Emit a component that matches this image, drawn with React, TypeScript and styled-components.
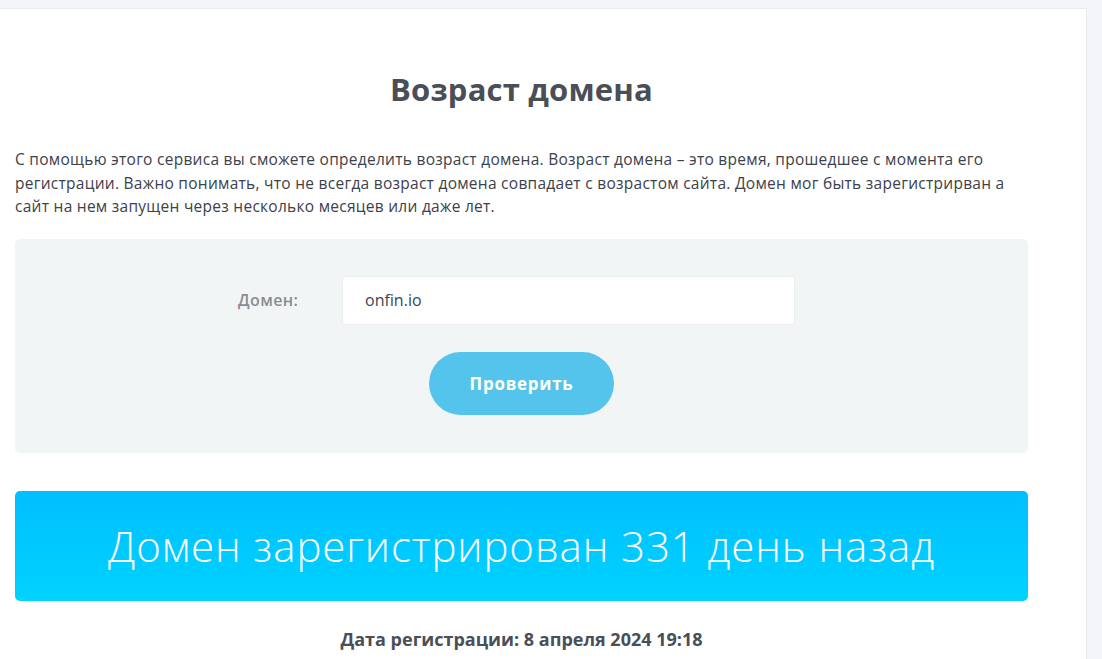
import React from "react";
import styled, { createGlobalStyle } from "styled-components";

const Global = createGlobalStyle`
  html, body { margin: 0; padding: 0; background: #f4f5f8; }
  body { font-family: "Open Sans", "Noto Sans", sans-serif; }
  * { box-sizing: border-box; }
`;

const Card = styled.div`
  margin-top: 8px;
  width: 1087px;
  min-height: 651px;
  background: #ffffff;
  border-top: 1px solid #e8eaee;
  border-right: 1px solid #e8eaee;
  padding: 62px 0 0 15px;
`;

const Inner = styled.div`
  width: 1013px;
  display: flex;
  flex-direction: column;
`;

const Title = styled.h1`
  margin: 0;
  font-family: "Open Sans", sans-serif;
  font-weight: 700;
  font-size: 31px;
  letter-spacing: 0.2px;
  line-height: 36px;
  color: #4a4e57;
  text-align: center;
`;

const Lead = styled.p`
  margin: 41px 0 0;
  font-size: 15.5px;
  letter-spacing: 0.27px;
  line-height: 23.5px;
  color: #3d4149;
  white-space: nowrap;
`;

const FormBox = styled.div`
  margin-top: 20px;
  height: 214px;
  background: #f2f5f6;
  border-radius: 5px;
  padding-top: 37px;
  display: flex;
  flex-direction: column;
  align-items: center;
  gap: 27px;
`;

const Row = styled.div`
  display: flex;
  align-items: center;
  padding-right: 10px;
`;

const Label = styled.label`
  width: 104px;
  font-size: 16px;
  letter-spacing: 0.4px;
  font-weight: 600;
  color: #8a8d91;
`;

const Input = styled.div`
  width: 453px;
  height: 49px;
  background: #fff;
  border: 1px solid #eceef0;
  border-radius: 3px;
  display: flex;
  align-items: center;
  padding-left: 22px;
  font-size: 16px;
  color: #3c4550;
`;

const Button = styled.button`
  width: 185px;
  height: 63px;
  border: none;
  border-radius: 32px;
  background: #55c4ec;
  color: #fff;
  font-family: inherit;
  font-weight: 700;
  font-size: 17px;
  letter-spacing: 0.7px;
  cursor: pointer;
`;

const Result = styled.div`
  margin-top: 38px;
  height: 110px;
  border-radius: 5px;
  background: linear-gradient(180deg, #00bfff 0%, #00d3ff 100%);
  display: flex;
  align-items: center;
  justify-content: center;
  color: #fff;
  font-size: 42px;
  letter-spacing: 0.9px;
  font-weight: 300;
`;

const DateLine = styled.div`
  margin-top: 26px;
  text-align: center;
  font-size: 18px;
  line-height: 24px;
  font-weight: 700;
  color: #4a4e57;
`;

export default function App() {
  return (
    <>
      <Global />
      <Card>
        <Inner>
          <Title>Возраст домена</Title>
          <Lead>
            С помощью этого сервиса вы сможете определить возраст домена. Возраст домена – это время, прошедшее с момента его
            <br />
            регистрации. Важно понимать, что не всегда возраст домена совпадает с возрастом сайта. Домен мог быть зарегистрирван а
            <br />
            сайт на нем запущен через несколько месяцев или даже лет.
          </Lead>
          <FormBox>
            <Row>
              <Label>Домен:</Label>
              <Input>onfin.io</Input>
            </Row>
            <Button>Проверить</Button>
          </FormBox>
          <Result>Домен зарегистрирован 331 день назад</Result>
          <DateLine>Дата регистрации: 8 апреля 2024 19:18</DateLine>
        </Inner>
      </Card>
    </>
  );
}
